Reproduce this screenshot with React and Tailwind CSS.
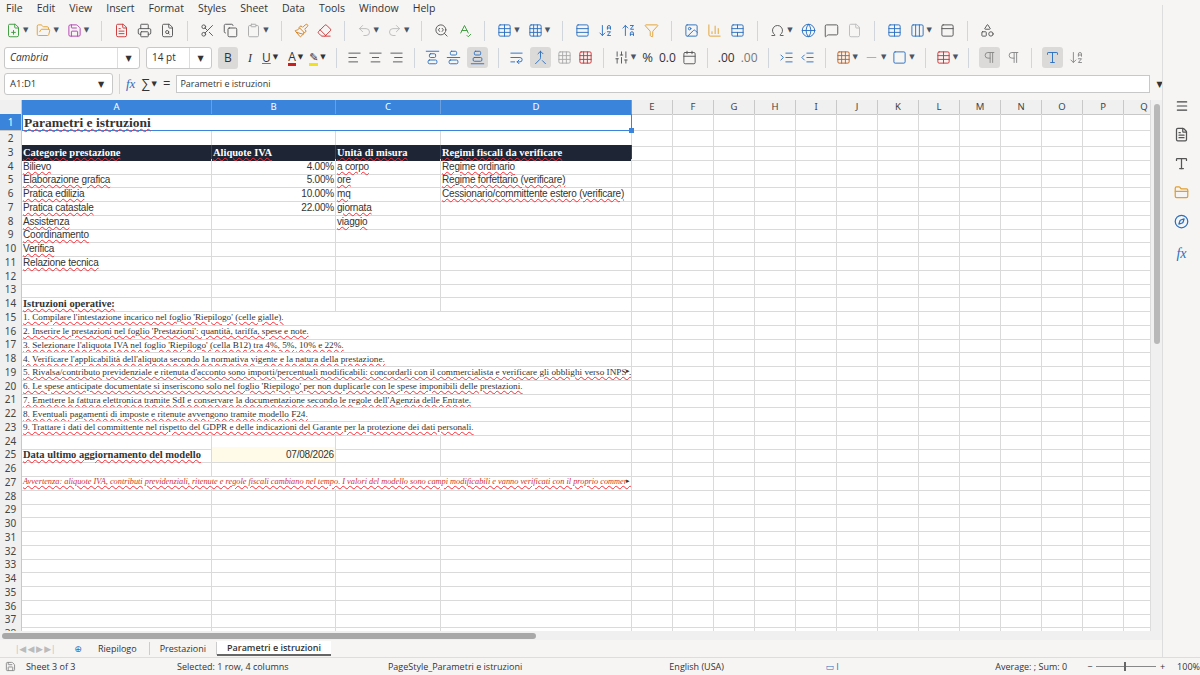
import React from "react";
import {
  FilePlus, FolderOpen, Save, FileText, Printer, FileSearch, Scissors, Copy, Clipboard, Paintbrush, Eraser,
  Undo2, Redo2, SearchCode, SpellCheck, Table, Grid3x3, ArrowDownAZ, ArrowUpZA, Filter, Image, BarChart3,
  Omega, Globe, MessageSquare, File, Columns3, PanelTop, Shapes, AlignLeft, AlignCenter,
  AlignRight, AlignVerticalJustifyStart, AlignVerticalJustifyCenter, AlignVerticalJustifyEnd, WrapText,
  Merge, Calendar, IndentIncrease, IndentDecrease, Square, Minus, Pilcrow, Menu, Sliders,
  Type, FolderClosed, Compass, Save as SaveIc, TableCellsMerge, Rows3
} from "lucide-react";

const F = { fontFamily: '"Open Sans","DejaVu Sans",sans-serif' };
const SERIF = { fontFamily: '"Liberation Serif","DejaVu Serif",serif' };
const SANS = { fontFamily: '"Liberation Sans","Noto Sans",sans-serif', letterSpacing: "-0.2px" };

const Ic = ({ I, c = "#555", dd }) => (
  <div className="flex items-center">
    <I size={15} color={c} strokeWidth={1.5} />
    {dd && <span className="text-[7px] text-gray-600 ml-[2px]">▼</span>}
  </div>
);
const Sep = () => <div className="w-px h-5 bg-gray-300 mx-1" />;

const cols = ["A", "B", "C", "D", "E", "F", "G", "H", "I", "J", "K", "L", "M", "N", "O", "P", "Q"];
const gridCols = "grid grid-cols-[22px_190px_124px_105px_191px_repeat(13,41px)]";
const wavy = "underline decoration-wavy decoration-red-500 decoration-1 underline-offset-[1px]";

const rows = {
  4: ["Bilievo", "4.00%", "a corpo", "Regime ordinario"],
  5: ["Elaborazione grafica", "5.00%", "ore", "Regime forfettario (verificare)"],
  6: ["Pratica edilizia", "10.00%", "mq", "Cessionario/committente estero (verificare)"],
  7: ["Pratica catastale", "22.00%", "giornata", ""],
  8: ["Assistenza", "", "viaggio", ""],
  9: ["Coordinamento", "", "", ""],
  10: ["Verifica", "", "", ""],
  11: ["Relazione tecnica", "", "", ""],
};
const instr = {
  15: "1. Compilare l'intestazione incarico nel foglio 'Riepilogo' (celle gialle).",
  16: "2. Inserire le prestazioni nel foglio 'Prestazioni': quantità, tariffa, spese e note.",
  17: "3. Selezionare l'aliquota IVA nel foglio 'Riepilogo' (cella B12) tra 4%, 5%, 10% e 22%.",
  18: "4. Verificare l'applicabilità dell'aliquota secondo la normativa vigente e la natura della prestazione.",
  19: "5. Rivalsa/contributo previdenziale e ritenuta d'acconto sono importi/percentuali modificabili: concordarli con il commercialista e verificare gli obblighi verso INPS o cassa",
  20: "6. Le spese anticipate documentate si inseriscono solo nel foglio 'Riepilogo' per non duplicarle con le spese imponibili delle prestazioni.",
  21: "7. Emettere la fattura elettronica tramite SdI e conservare la documentazione secondo le regole dell'Agenzia delle Entrate.",
  22: "8. Eventuali pagamenti di imposte e ritenute avvengono tramite modello F24.",
  23: "9. Trattare i dati del committente nel rispetto del GDPR e delle indicazioni del Garante per la protezione dei dati personali.",
};

const RH = ({ n, sel }) => (
  <div className={`flex items-center justify-center text-[10px] border-b border-r border-[#c8c8c8] ${sel ? "bg-[#3a84dc] text-white" : "bg-[#f0f0f0] text-[#444]"}`} style={{ fontFamily: '"Noto Sans",sans-serif' }}>{n}</div>
);
const C = ({ children, cls = "" }) => (
  <div className={`border-b border-r border-[#dadada] whitespace-nowrap flex items-center px-[1px] ${cls}`}>{children}</div>
);
const Empties = ({ n }) => Array.from({ length: n }).map((_, i) => <C key={i} />);

function Row({ n }) {
  const h = n === 1 ? "h-[17px]" : "h-[13.75px]";
  let cells;
  if (n === 1) {
    cells = <>
      <div className="col-span-4 border-[1.5px] border-[#3a84dc] bg-white flex items-center px-[1px] relative">
        <span className={`text-[13.5px] font-bold leading-[14px] ${wavy}`} style={SERIF}>Parametri e istruzioni</span>
        <div className="absolute right-[-3px] bottom-[-3px] w-[5px] h-[5px] bg-[#3a84dc]" />
      </div>
      <Empties n={13} /></>;
  } else if (n === 3) {
    cells = <>
      {["Categorie prestazione", "Aliquote IVA", "Unità di misura", "Regimi fiscali da verificare"].map((t) => (
        <div key={t} className="bg-[#1e2636] text-white border-r border-[#3a4150] flex items-center px-[1px] overflow-hidden whitespace-nowrap">
          <span className={`text-[10.5px] font-bold leading-[11px] ${wavy}`} style={SERIF}>{t}</span>
        </div>))}
      <Empties n={13} /></>;
  } else if (rows[n]) {
    const [a, b, c, d] = rows[n];
    cells = <>
      <C><span className={`text-[10px] leading-[11px] ${wavy}`} style={SANS}>{a}</span></C>
      <C cls="justify-end"><span className="text-[10px] leading-[11px]" style={SANS}>{b}</span></C>
      <C><span className={`text-[10px] leading-[11px] ${c ? wavy : ""}`} style={SANS}>{c}</span></C>
      <C><span className={`text-[10px] leading-[11px] ${d ? wavy : ""}`} style={SANS}>{d}</span></C>
      <Empties n={13} /></>;
  } else if (n === 14) {
    cells = <>
      <C><span className={`text-[10.5px] font-bold leading-[11px] ${wavy}`} style={SERIF}>Istruzioni operative:</span></C>
      <Empties n={16} /></>;
  } else if (instr[n]) {
    cells = <>
      <div className="col-span-4 border-b border-r border-[#dadada] overflow-hidden whitespace-nowrap flex items-center px-[1px] relative">
        <span className={`text-[9.2px] leading-[10px] ${wavy}`} style={SERIF}>{instr[n]}</span>
        {n === 19 && <span className="absolute right-0 top-[2px] w-[5px] text-[7px] bg-white leading-none">▸</span>}
      </div>
      <Empties n={13} /></>;
  } else if (n === 25) {
    cells = <>
      <C><span className={`text-[10.5px] font-bold leading-[11px] ${wavy}`} style={SERIF}>Data ultimo aggiornamento del modello</span></C>
      <C cls="justify-end bg-[#fffbe8]"><span className="text-[10px] leading-[11px]" style={SANS}>07/08/2026</span></C>
      <Empties n={15} /></>;
  } else if (n === 27) {
    cells = <>
      <div className="col-span-4 border-b border-r border-[#dadada] overflow-hidden whitespace-nowrap flex items-center px-[1px] relative">
        <span className={`text-[8.3px] italic leading-[10px] text-[#d0302a] ${wavy}`} style={SERIF}>Avvertenza: aliquote IVA, contributi previdenziali, ritenute e regole fiscali cambiano nel tempo. I valori del modello sono campi modificabili e vanno verificati con il proprio commercialista.</span>
        <span className="absolute right-0 top-[2px] w-[5px] text-[7px] bg-white leading-none">▸</span>
      </div>
      <Empties n={13} /></>;
  } else {
    cells = <Empties n={17} />;
  }
  return <div className={`${gridCols} ${h}`}><RH n={n} sel={n === 1} />{cells}</div>;
}

export default function App() {
  return (
    <div className="w-[1200px] h-[675px] bg-[#f6f5f4] flex flex-col overflow-hidden text-[#333]" style={F}>
      <div className="h-[17px] flex items-center px-[6px] gap-[14px] text-[10.5px] text-[#333] relative">
        {["File", "Edit", "View", "Insert", "Format", "Styles", "Sheet", "Data", "Tools", "Window", "Help"].map(m => <span key={m}>{m}</span>)}
        <span className="absolute right-[5px] top-0 text-[11px]">×</span>
      </div>
      <div className="h-[27px] flex items-center px-[6px] gap-[8px]">
        <Ic I={FilePlus} c="#3a9a3a" dd /><Ic I={FolderOpen} c="#e0a030" dd /><Ic I={Save} c="#b040b0" dd /><Sep />
        <Ic I={FileText} c="#c33" /><Ic I={Printer} /><Ic I={FileSearch} /><Sep />
        <Ic I={Scissors} /><Ic I={Copy} /><Ic I={Clipboard} c="#aaa" dd /><Sep />
        <Ic I={Paintbrush} c="#d08020" /><Ic I={Eraser} c="#c33" /><Sep />
        <Ic I={Undo2} c="#bbb" dd /><Ic I={Redo2} c="#bbb" dd /><Sep />
        <Ic I={SearchCode} /><Ic I={SpellCheck} c="#3a9a3a" /><Sep />
        <Ic I={Table} c="#2a6fc0" dd /><Ic I={Grid3x3} c="#2a6fc0" dd /><Sep />
        <Ic I={Rows3} c="#2a6fc0" /><Ic I={ArrowDownAZ} c="#2a6fc0" /><Ic I={ArrowUpZA} c="#2a6fc0" /><Ic I={Filter} c="#e0a030" /><Sep />
        <Ic I={Image} c="#2a6fc0" /><Ic I={BarChart3} c="#e0a030" /><Ic I={TableCellsMerge} c="#2a6fc0" /><Sep />
        <Ic I={Omega} dd /><Ic I={Globe} c="#2a6fc0" /><Ic I={MessageSquare} /><Ic I={File} c="#bbb" /><Sep />
        <Ic I={Table} c="#2a6fc0" /><Ic I={Columns3} c="#2a6fc0" dd /><Ic I={PanelTop} /><Sep /><Ic I={Shapes} />
      </div>
      <div className="h-[27px] flex items-center px-[4px] gap-[6px]">
        <div className="w-[136px] h-[22px] bg-white border border-[#c8c8c8] rounded-[3px] flex items-center">
          <span className="flex-1 px-[5px] text-[10px] italic">Cambria</span>
          <span className="w-[22px] border-l border-[#ddd] h-full flex items-center justify-center text-[8px]">▼</span>
        </div>
        <div className="w-[66px] h-[22px] bg-white border border-[#c8c8c8] rounded-[3px] flex items-center">
          <span className="flex-1 px-[5px] text-[10px]">14 pt</span>
          <span className="w-[22px] border-l border-[#ddd] h-full flex items-center justify-center text-[8px]">▼</span>
        </div>
        <div className="w-[20px] h-[22px] bg-[#dcdad8] rounded-[3px] flex items-center justify-center text-[12px]">B</div>
        <span className="text-[12px] italic px-[4px]" style={SERIF}>I</span>
        <span className="text-[12px] underline decoration-[#3a84dc]">U</span><span className="text-[7px] -ml-1">▼</span>
        <span className="text-[12px] border-b-[3px] border-[#c8201e] leading-[13px] ml-1">A</span><span className="text-[7px] -ml-1">▼</span>
        <span className="text-[11px] border-b-[3px] border-[#f0e020] leading-[13px]">✎</span><span className="text-[7px] -ml-1">▼</span><Sep />
        <Ic I={AlignLeft} /><Ic I={AlignCenter} /><Ic I={AlignRight} /><Sep />
        <Ic I={AlignVerticalJustifyStart} c="#2a6fc0" /><Ic I={AlignVerticalJustifyCenter} c="#2a6fc0" />
        <div className="bg-[#dcdad8] rounded-[3px] p-[3px]"><Ic I={AlignVerticalJustifyEnd} c="#2a6fc0" /></div><Sep />
        <Ic I={WrapText} c="#2a6fc0" />
        <div className="bg-[#dcdad8] rounded-[3px] p-[3px]"><Ic I={Merge} c="#2a6fc0" /></div>
        <Ic I={Grid3x3} c="#aaa" /><Ic I={Grid3x3} c="#c33" /><Sep />
        <Ic I={Sliders} dd /><span className="text-[13px]">%</span><span className="text-[12px]">0.0</span><Ic I={Calendar} /><Sep />
        <span className="text-[12px]">.00</span><span className="text-[12px] text-[#777]">.00</span><Sep />
        <Ic I={IndentIncrease} c="#2a6fc0" /><Ic I={IndentDecrease} c="#2a6fc0" /><Sep />
        <Ic I={Grid3x3} c="#c06020" dd /><Ic I={Minus} c="#aaa" dd /><Ic I={Square} c="#2a6fc0" dd /><Sep />
        <Ic I={Table} c="#c33" dd /><Sep />
        <div className="bg-[#dcdad8] rounded-[3px] p-[3px]"><Ic I={Pilcrow} c="#888" /></div><Ic I={Pilcrow} c="#888" /><Sep />
        <div className="bg-[#dcdad8] rounded-[3px] p-[3px]"><Ic I={Type} c="#2a6fc0" /></div><Ic I={ArrowDownAZ} c="#888" />
      </div>
      <div className="h-[26px] flex items-center pl-[4px] gap-[6px]">
        <div className="w-[109px] h-[22px] bg-white border border-[#c8c8c8] rounded-[3px] flex items-center">
          <span className="flex-1 px-[5px] text-[9.5px]">A1:D1</span>
          <span className="w-[22px] h-full flex items-center justify-center text-[8px]">▼</span>
        </div>
        <div className="w-px h-5 bg-gray-300" />
        <span className="text-[13px] italic text-[#2a6fc0]" style={SERIF}>fx</span>
        <span className="text-[13px]">∑</span><span className="text-[7px] -ml-1">▼</span>
        <span className="text-[13px]">=</span>
        <div className="w-[974px] h-[18px] bg-white border border-[#c8c8c8] flex items-center px-[3px] text-[9px]">Parametri e istruzioni</div>
        <span className="text-[8px]">▼</span>
      </div>
      <div className="flex flex-1 min-h-0 mt-[3px]">
        <div className="flex flex-col w-[1162px]">
          <div className="flex flex-1 min-h-0">
            <div className="w-[1150px] bg-white overflow-hidden">
              <div className={`${gridCols} h-[14px]`}>
                <div className="bg-[#f0f0f0] border-b border-r border-[#c8c8c8]" />
                {cols.map((c, i) => (
                  <div key={c} className={`flex items-center justify-center text-[9.5px] border-b border-r ${i < 4 ? "bg-[#3a84dc] text-white border-[#6aa0e0]" : "bg-[#f0f0f0] text-[#444] border-[#c8c8c8]"}`} style={{ fontFamily: '"Noto Sans",sans-serif' }}>{c}</div>
                ))}
              </div>
              {Array.from({ length: 38 }).map((_, i) => <Row key={i} n={i + 1} />)}
            </div>
            <div className="w-[12px] bg-[#f0f0f0] border-l border-[#ddd] flex justify-center pt-[4px]">
              <div className="w-[6px] h-[240px] bg-[#b8b8b8] rounded" />
            </div>
          </div>
          <div className="h-[9px] bg-[#f0f0f0] flex items-center px-[2px]">
            <div className="w-[534px] h-[6px] bg-[#a8a8a8] rounded" />
          </div>
          <div className="h-[17px] flex items-center text-[9px] text-[#333]">
            <span className="w-[70px] text-[#bbb] text-center tracking-tighter">|◀ ◀ ▶ ▶|</span>
            <span className="w-[16px] text-[#2a6fc0] text-center">⊕</span>
            <span className="px-[12px] border-r border-[#ccc]">Riepilogo</span>
            <span className="px-[10px] border-r border-[#ccc]">Prestazioni</span>
            <span className="px-[10px] font-semibold border-b-2 border-[#666] bg-white">Parametri e istruzioni</span>
          </div>
        </div>
        <div className="w-[38px] border-l border-[#ddd] flex flex-col items-center pt-[8px] gap-[14px] -mt-[95px] relative bg-[#f6f5f4]">
          <div className="h-[72px]" />
          <Menu size={14} color="#444" />
          <FileText size={15} color="#555" />
          <Type size={15} color="#555" />
          <FolderClosed size={15} color="#e0a030" />
          <Compass size={15} color="#2a6fc0" />
          <span className="text-[14px] italic text-[#2a6fc0]" style={SERIF}>fx</span>
        </div>
      </div>
      <div className="h-[18px] flex items-center text-[9px] text-[#333] border-t border-[#ddd]">
        <SaveIc size={11} color="#888" className="ml-[5px]" />
        <span className="ml-[10px] w-[152px]">Sheet 3 of 3</span>
        <span className="w-[212px]">Selected: 1 row, 4 columns</span>
        <span className="w-[283px]">PageStyle_Parametri e istruzioni</span>
        <span className="w-[157px]">English (USA)</span>
        <span className="w-[120px] text-[#2a6fc0]">▭ I</span>
        <span className="w-[123px] text-right">Average: ; Sum: 0</span>
        <span className="ml-[20px]">−</span>
        <div className="w-[60px] h-px bg-[#888] mx-[4px] relative"><div className="absolute left-[28px] -top-[4px] w-[2px] h-[9px] bg-[#666]" /></div>
        <span>+</span><span className="ml-[12px]">100%</span>
      </div>
    </div>
  );
}
